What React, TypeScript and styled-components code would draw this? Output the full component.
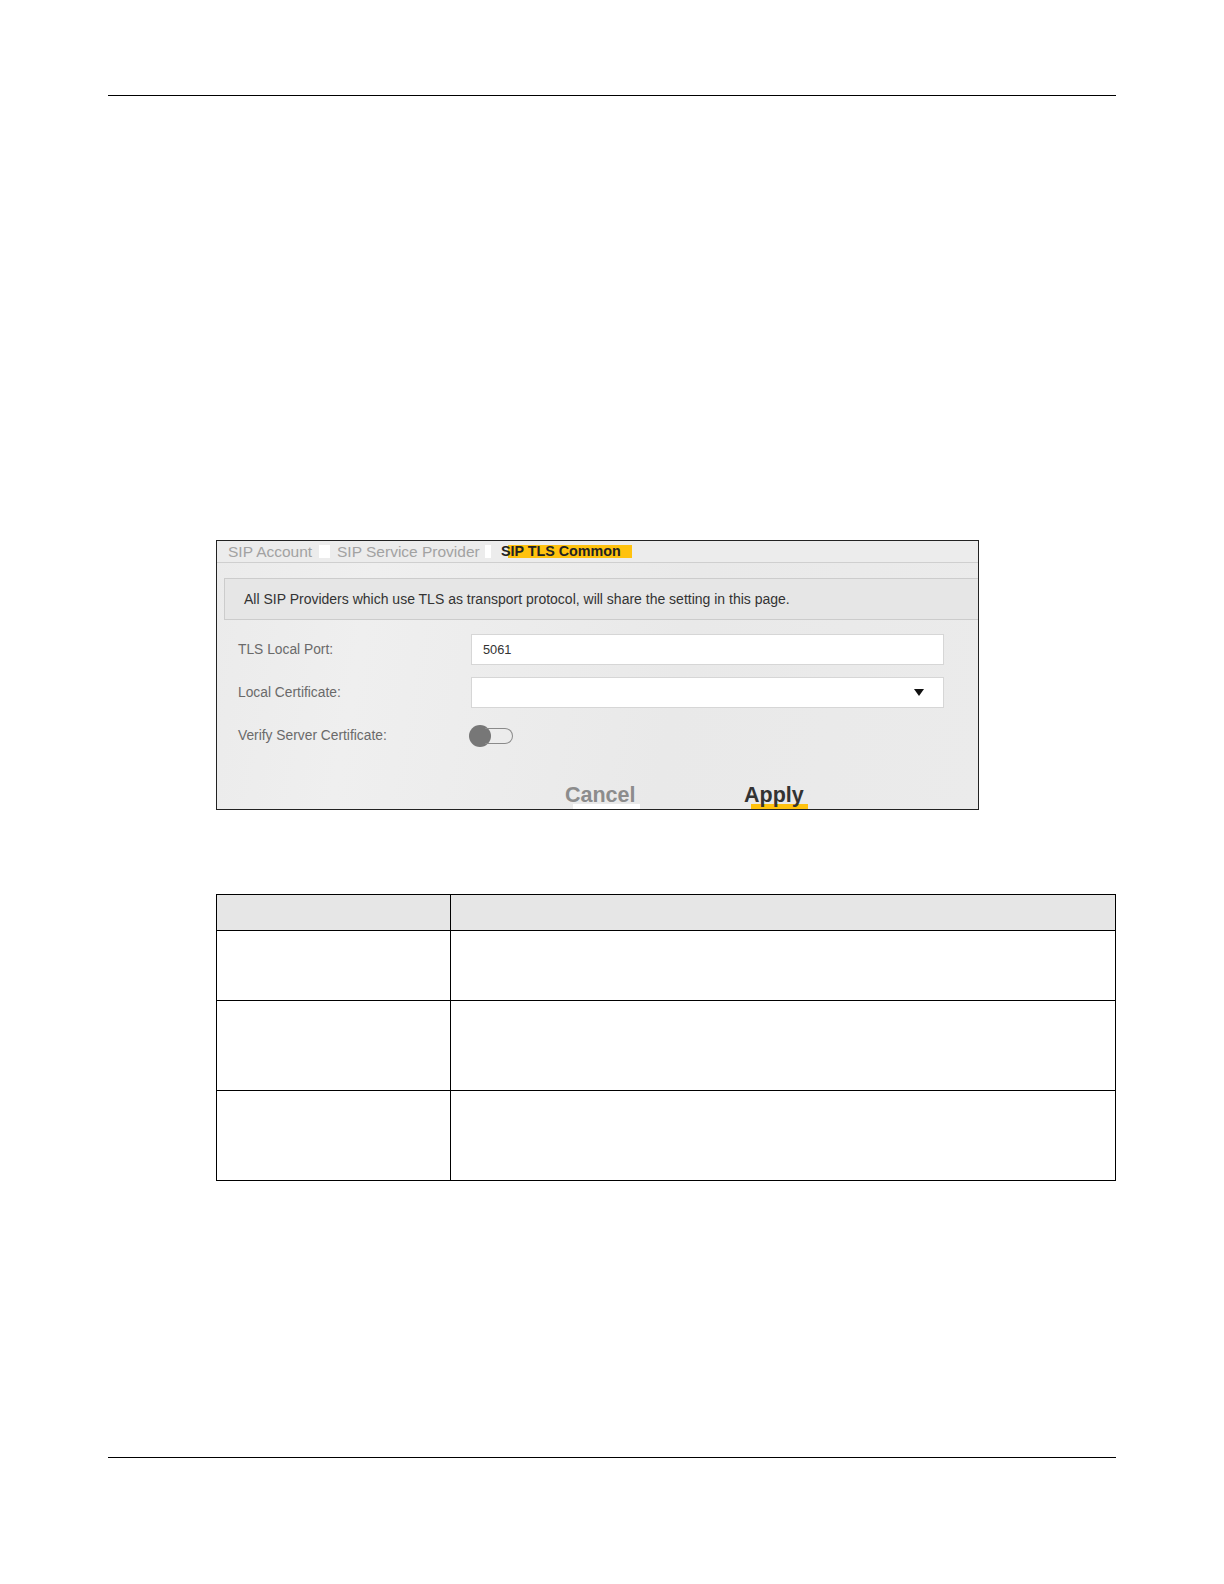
import React from "react";
import styled, { createGlobalStyle } from "styled-components";

const Global = createGlobalStyle`
  html, body { margin: 0; padding: 0; background: #fff; }
  body { font-family: "Liberation Sans", Arial, sans-serif; }
`;

const Page = styled.div`
  width: 1224px;
  min-height: 1584px;
  box-sizing: border-box;
  padding: 95px 108px 0 108px;
  display: flex;
  flex-direction: column;
`;

const Rule = styled.div<{ $top?: number }>`
  height: 1px;
  background: #000;
  margin-top: ${(p) => p.$top ?? 0}px;
`;

const Panel = styled.div`
  margin: 444px 0 0 108px;
  width: 763px;
  height: 270px;
  box-sizing: border-box;
  border: 1px solid #222;
  background: linear-gradient(100deg, #ebebeb 0%, #efefef 20%, #e9e9e9 60%, #ebebeb 100%);
  overflow: hidden;
  display: flex;
  flex-direction: column;
`;

const TabBar = styled.div`
  height: 21px;
  flex: none;
  border-bottom: 1px solid #cfcfcf;
  padding-left: 11px;
  display: flex;
  align-items: center;
  background: #ececec;
`;

const Tab = styled.span<{ $active?: boolean; $w: number; $tail: number; $gap: number }>`
  display: inline-block;
  width: ${(p) => p.$w}px;
  height: 13px;
  line-height: 13px;
  font-size: ${(p) => (p.$active ? 14.3 : 15.5)}px;
  white-space: nowrap;
  margin-right: ${(p) => p.$gap}px;
  color: ${(p) => (p.$active ? "#222" : "#a2a2a2")};
  font-weight: ${(p) => (p.$active ? 700 : 400)};
  background: ${(p) =>
    p.$active
      ? "linear-gradient(to right, transparent 7px, #ffc20e 7px)"
      : `linear-gradient(to right, transparent calc(100% - ${p.$tail}px), #fff calc(100% - ${p.$tail}px))`};
`;

const Notice = styled.div`
  margin: 15px 0 0 7px;
  height: 42px;
  flex: none;
  box-sizing: border-box;
  border: 1px solid #cccccc;
  border-right: none;
  background: #e6e6e6;
  display: flex;
  align-items: center;
  padding-left: 19px;
  font-size: 14px;
  color: #333;
`;

const Form = styled.div`
  margin-top: 14px;
  padding-left: 21px;
  display: flex;
  flex-direction: column;
  gap: 12px;
`;

const Row = styled.div`
  display: grid;
  grid-template-columns: 233px 473px;
  align-items: center;
  height: 31px;
`;

const Label = styled.span`
  font-size: 13.8px;
  color: #6a6a6a;
`;

const Input = styled.div`
  height: 31px;
  box-sizing: border-box;
  background: #fff;
  border: 1px solid #d6d6d6;
  display: flex;
  align-items: center;
  justify-content: space-between;
  padding: 0 19px 0 11px;
  font-size: 12.8px;
  color: #333;
`;

const Switch = styled.div`
  width: 44px;
  height: 22px;
  display: flex;
  align-items: center;
  margin-left: -2px;
`;

const Knob = styled.div`
  width: 22px;
  height: 22px;
  border-radius: 50%;
  background: #777;
  flex: none;
`;

const Track = styled.div`
  width: 28px;
  height: 16px;
  box-sizing: border-box;
  border: 1px solid #8a8a8a;
  border-left: none;
  border-radius: 0 8px 8px 0;
  margin-left: -6px;
`;

const Buttons = styled.div`
  margin-top: 32px;
  padding-left: 348px;
  display: grid;
  grid-template-columns: 179px auto;
`;

const Btn = styled.span<{ $primary?: boolean }>`
  display: inline-block;
  font-size: 21.5px;
  font-weight: 700;
  line-height: 24px;
  height: 32px;
  color: ${(p) => (p.$primary ? "#333" : "#8c8c8c")};
  background: linear-gradient(${(p) => (p.$primary ? "#ffc20e, #ffc20e" : "#fff, #fff")}) no-repeat;
  background-size: ${(p) => (p.$primary ? "57px 10px" : "67px 10px")};
  background-position: ${(p) => (p.$primary ? "7px 21px" : "8px 21px")};
`;

const Table = styled.div`
  margin: 84px 0 0 108px;
  width: 898px;
  border: 1px solid #000;
  display: grid;
  grid-template-columns: 233px 1fr;
`;

const Cell = styled.div<{ $h: number; $head?: boolean; $first?: boolean; $top?: boolean }>`
  height: ${(p) => p.$h}px;
  background: ${(p) => (p.$head ? "#e6e6e6" : "#fff")};
  border-left: ${(p) => (p.$first ? "none" : "1px solid #000")};
  border-top: ${(p) => (p.$top ? "none" : "1px solid #000")};
`;

const Arrow = () => (
  <svg width="10" height="7" viewBox="0 0 10 7">
    <polygon points="0,0 10,0 5,7" fill="#111" />
  </svg>
);

export default function App() {
  const rows = [69, 89, 89];
  return (
    <>
      <Global />
      <Page>
        <Rule />
        <Panel>
          <TabBar>
            <Tab $w={102} $tail={11} $gap={7}>SIP Account</Tab>
            <Tab $w={154} $tail={6} $gap={10}>SIP Service Provider</Tab>
            <Tab $active $w={131} $tail={0} $gap={0}>SIP TLS Common</Tab>
          </TabBar>
          <Notice>All SIP Providers which use TLS as transport protocol, will share the setting in this page.</Notice>
          <Form>
            <Row>
              <Label>TLS Local Port:</Label>
              <Input>5061</Input>
            </Row>
            <Row>
              <Label>Local Certificate:</Label>
              <Input>
                <span />
                <Arrow />
              </Input>
            </Row>
            <Row>
              <Label>Verify Server Certificate:</Label>
              <Switch>
                <Knob />
                <Track />
              </Switch>
            </Row>
          </Form>
          <Buttons>
            <Btn>Cancel</Btn>
            <Btn $primary>Apply</Btn>
          </Buttons>
        </Panel>
        <Table>
          <Cell $h={35} $head $first $top />
          <Cell $h={35} $head $top />
          {rows.map((h, i) => (
            <React.Fragment key={i}>
              <Cell $h={h} $first />
              <Cell $h={h} />
            </React.Fragment>
          ))}
        </Table>
        <Rule $top={276} />
      </Page>
    </>
  );
}
